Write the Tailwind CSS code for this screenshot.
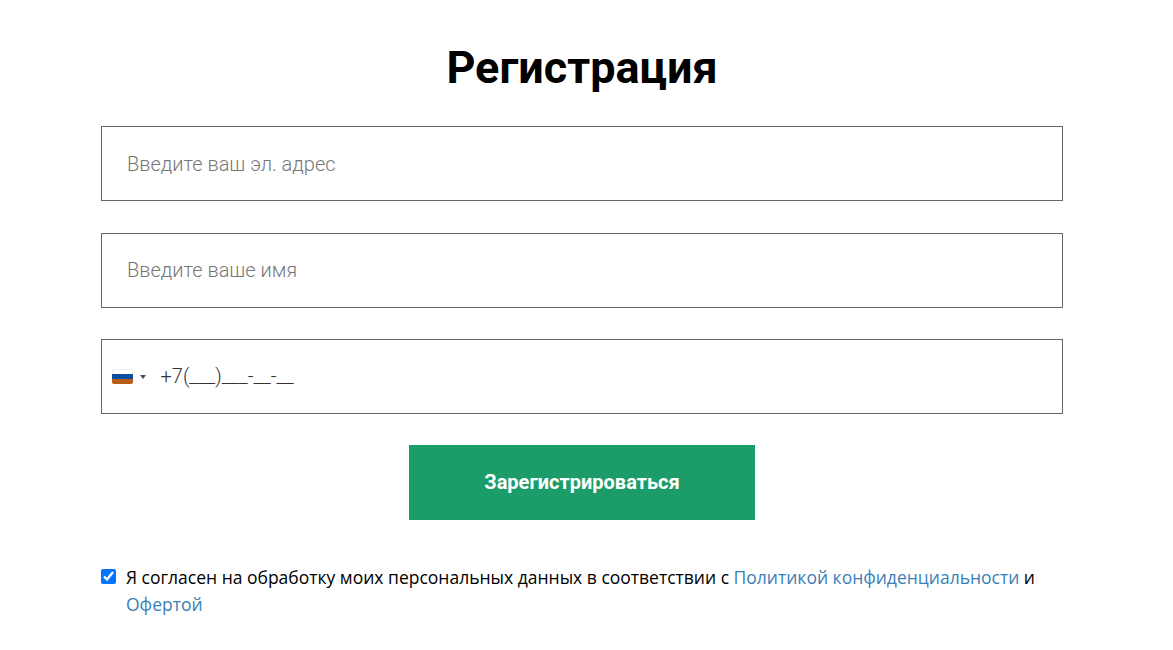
<!DOCTYPE html>
<html lang="ru">
<head>
  <meta charset="UTF-8" />
  <title>Регистрация</title>
  <script src="https://cdn.jsdelivr.net/npm/@tailwindcss/browser@4"></script>
</head>
<body class="bg-white font-['Roboto',sans-serif]">
  <div class="w-[962px] ml-[101px] pt-[39px]">
    <h1 class="text-center text-[45px] leading-[58px] font-bold text-black">Регистрация</h1>

    <form class="mt-[29px]">
      <input type="text" placeholder="Введите ваш эл. адрес" class="block w-full h-[75px] px-[25px] border border-[#666] text-[20px] font-light outline-none placeholder:text-[#777]" />
      <input type="text" placeholder="Введите ваше имя" class="block w-full h-[75px] mt-[32px] px-[25px] pb-[2px] border border-[#666] text-[20px] font-light outline-none placeholder:text-[#777]" />

      <!-- Phone -->
      <div class="flex items-center w-full h-[75px] mt-[31px] border border-[#666]">
        <div class="flex items-center ml-[10px]">
          <svg width="21" height="15" viewBox="0 0 21 15">
            <rect x="0.5" y="0.5" width="20" height="14" rx="2" fill="#fff" stroke="#eee" />
            <rect x="0" y="5" width="21" height="5" fill="#0b4ea2" />
            <path d="M0 10h21v3a2 2 0 0 1-2 2H2a2 2 0 0 1-2-2z" fill="#b85c1a" />
          </svg>
          <div class="ml-[7px] w-0 h-0 border-x-[3px] border-x-transparent border-t-[4px] border-t-[#4a4a5a]"></div>
        </div>
        <span class="ml-[14.5px] mb-[2px] text-[20px] font-light text-[#333]">+7(___)___-__-__</span>
      </div>

      <button type="button" class="block w-[346px] h-[75px] mx-auto mt-[31px] pb-[2px] bg-[#1c9c68] text-white text-[20px] font-bold">Зарегистрироваться</button>

      <!-- Consent -->
      <div class="flex mt-[44px] font-['Open_Sans',sans-serif] text-[17.5px] leading-[27px] text-black">
        <input type="checkbox" checked class="w-[15px] h-[15px] mt-[5px] shrink-0 accent-[#0075ff]" />
        <p class="ml-[10px]">Я согласен на обработку моих персональных данных в соответствии с <a href="#" class="text-[#3b7fb8]">Политикой конфиденциальности</a> и <a href="#" class="text-[#3b7fb8]">Офертой</a></p>
      </div>
    </form>
  </div>
</body>
</html>
